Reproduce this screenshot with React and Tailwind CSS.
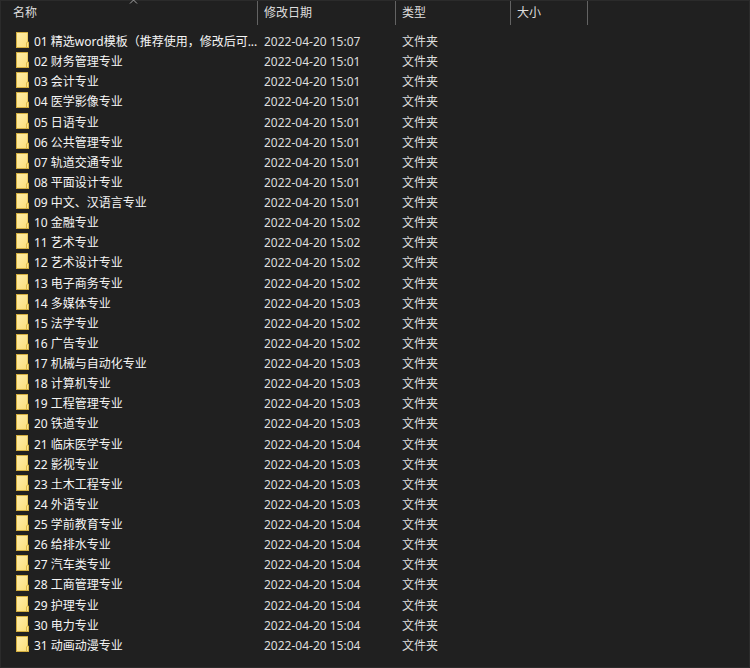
import React, { useState } from 'react';

const folders = [
  { name: '01 精选word模板（推荐使用，修改后可...', modified: '2022-04-20 15:07' },
  { name: '02 财务管理专业', modified: '2022-04-20 15:01' },
  { name: '03 会计专业', modified: '2022-04-20 15:01' },
  { name: '04 医学影像专业', modified: '2022-04-20 15:01' },
  { name: '05 日语专业', modified: '2022-04-20 15:01' },
  { name: '06 公共管理专业', modified: '2022-04-20 15:01' },
  { name: '07 轨道交通专业', modified: '2022-04-20 15:01' },
  { name: '08 平面设计专业', modified: '2022-04-20 15:01' },
  { name: '09 中文、汉语言专业', modified: '2022-04-20 15:01' },
  { name: '10 金融专业', modified: '2022-04-20 15:02' },
  { name: '11 艺术专业', modified: '2022-04-20 15:02' },
  { name: '12 艺术设计专业', modified: '2022-04-20 15:02' },
  { name: '13 电子商务专业', modified: '2022-04-20 15:02' },
  { name: '14 多媒体专业', modified: '2022-04-20 15:03' },
  { name: '15 法学专业', modified: '2022-04-20 15:02' },
  { name: '16 广告专业', modified: '2022-04-20 15:02' },
  { name: '17 机械与自动化专业', modified: '2022-04-20 15:03' },
  { name: '18 计算机专业', modified: '2022-04-20 15:03' },
  { name: '19 工程管理专业', modified: '2022-04-20 15:03' },
  { name: '20 铁道专业', modified: '2022-04-20 15:03' },
  { name: '21 临床医学专业', modified: '2022-04-20 15:04' },
  { name: '22 影视专业', modified: '2022-04-20 15:03' },
  { name: '23 土木工程专业', modified: '2022-04-20 15:03' },
  { name: '24 外语专业', modified: '2022-04-20 15:03' },
  { name: '25 学前教育专业', modified: '2022-04-20 15:04' },
  { name: '26 给排水专业', modified: '2022-04-20 15:04' },
  { name: '27 汽车类专业', modified: '2022-04-20 15:04' },
  { name: '28 工商管理专业', modified: '2022-04-20 15:04' },
  { name: '29 护理专业', modified: '2022-04-20 15:04' },
  { name: '30 电力专业', modified: '2022-04-20 15:04' },
  { name: '31 动画动漫专业', modified: '2022-04-20 15:04' },
];

const FolderIcon = () => (
  <svg className="w-[13px] h-4 shrink-0" viewBox="0 0 13 16" aria-hidden="true">
    <defs>
      <linearGradient id="folder" x1="0" y1="0" x2="1" y2="1">
        <stop offset="0" stopColor="#ffeda8" />
        <stop offset="1" stopColor="#fbdf7c" />
      </linearGradient>
    </defs>
    <path d="M0 0H12V9.5L13 10V16H0Z" fill="#d3ae3f" />
    <path d="M1 1H11.5V9.5L10 11V15H1Z" fill="url(#folder)" />
    <path d="M10.8 10.5H12.2V15H10.8Z" fill="#ffe68c" />
  </svg>
);

const Explorer = () => {
  const [ascending, setAscending] = useState(true);
  const rows = ascending ? folders : [...folders].reverse();

  return (
    <main className="min-h-screen flex flex-col bg-[#202020] border border-[#2b2b2b] pb-[11px] text-xs text-[#dedede] font-['Noto_Sans','Noto_Sans_CJK_SC',sans-serif]">
      <table className="w-full grow table-fixed border-separate border-spacing-0 text-left">
        <colgroup>
          <col className="w-[257px]" />
          <col className="w-[138px]" />
          <col className="w-[115px]" />
          <col className="w-[77px]" />
          <col />
        </colgroup>
        <thead>
          <tr className="h-[31px]">
            <th className="p-0 align-top font-normal" aria-sort={ascending ? 'ascending' : 'descending'}>
              <button
                onClick={() => setAscending(!ascending)}
                className="relative block w-full h-6 pl-3 text-left border-r border-[#636363]"
              >
                名称
                <svg className="absolute -top-px left-1/2 w-[9px] h-1" viewBox="0 0 9 4" fill="none" stroke="#a5a5a5" aria-hidden="true">
                  <path d={ascending ? 'M1 3.5L4.5 0L8 3.5' : 'M1 0.5L4.5 4L8 0.5'} />
                </svg>
              </button>
            </th>
            {['修改日期', '类型', '大小'].map((label) => (
              <th key={label} className="p-0 align-top font-normal">
                <button className="block w-full h-6 pl-1.5 text-left border-r border-[#636363]">{label}</button>
              </th>
            ))}
            <td className="p-0" />
          </tr>
        </thead>
        <tbody>
          {rows.map((folder) => (
            <tr key={folder.name} className="hover:bg-[#303030]">
              <td className="p-0 text-[#f5f5f5]">
                <div className="flex items-start gap-[5px] pl-[15px] leading-5 whitespace-nowrap">
                  <FolderIcon />
                  <span>{folder.name}</span>
                </div>
              </td>
              <td className="p-0 pl-1.5 leading-5">{folder.modified}</td>
              <td className="p-0 pl-1.5 leading-5">文件夹</td>
              <td className="p-0" />
              <td className="p-0" />
            </tr>
          ))}
        </tbody>
      </table>
    </main>
  );
};

export default Explorer;
